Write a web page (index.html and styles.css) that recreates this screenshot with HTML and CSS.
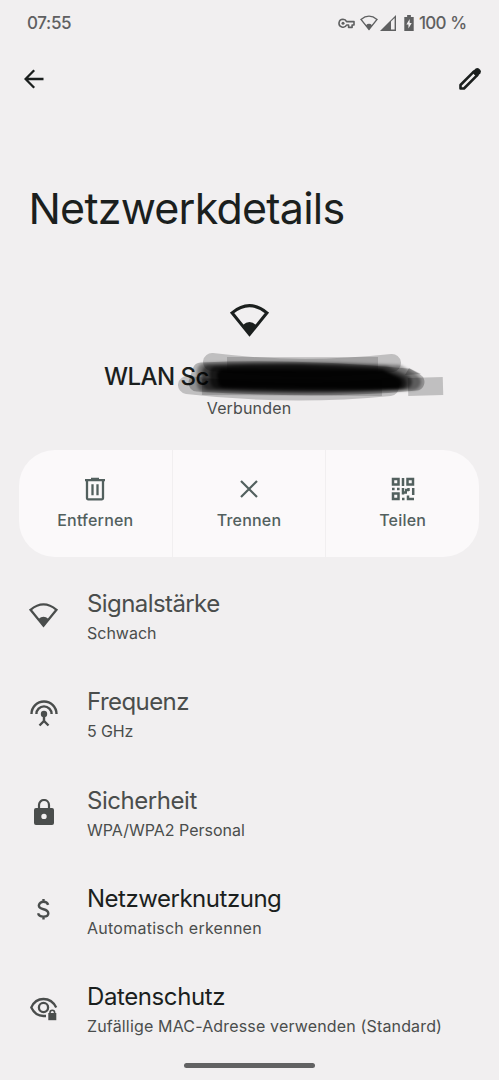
FILE: index.html
```html
<!DOCTYPE html>
<html lang="de">
<head>
<meta charset="utf-8">
<meta name="viewport" content="width=device-width">
<title>Netzwerkdetails</title>
<link rel="stylesheet" href="styles.css">
</head>
<body>
<svg class="defs" width="0" height="0" aria-hidden="true">
  <symbol id="wifi" viewBox="0 0 38 32">
    <path d="M2 8.5Q19-5.5 36 8.5L19 29.5Z" fill="none" stroke="currentColor" stroke-width="2.9"/>
    <path d="M12.5 20.5Q19 14.5 25.5 20.5L19 31Z" fill="currentColor"/>
  </symbol>
</svg>
<main class="screen">
  <header class="status">
    <span class="time">07:55</span>
    <div class="status-icons">
      <svg class="key" viewBox="0 0 17 11"><path d="M5 1.2a4 4 0 1 0 3.6 5.8h2v2.4h3.5V7H16V3.6H8.6A4 4 0 0 0 5 1.2Z" fill="none" stroke="currentColor" stroke-width="1.6" stroke-linejoin="round"/><circle cx="5" cy="5.3" r="1.5" fill="currentColor"/></svg>
      <svg class="status-wifi"><use href="#wifi"/></svg>
      <svg class="cell" viewBox="0 0 16 16"><path d="M0 16L16 0V16Z" fill="currentColor"/><path d="M11 6.6l3.6-3.6v11.6H11Z" fill="#f1eff0"/></svg>
      <svg class="battery" viewBox="0 0 10 17"><path d="M3 0h4v2h3v15H0V2h3Z" fill="currentColor"/><path d="M5.7 4.3L2.2 10h2.2v4.3L7.9 8.6H5.7Z" fill="#f1eff0"/></svg>
    </div>
    <span class="percent">100 %</span>
  </header>

  <nav class="toolbar">
    <svg class="back" viewBox="0 0 20 20"><path d="M19.5 10H2M10.2 1.2L1.5 10l8.7 8.8" fill="none" stroke="currentColor" stroke-width="2.3"/></svg>
    <svg class="edit" viewBox="0 0 24 24"><path d="M2.5 18L15.8 4.7l3.5 3.5L6 21.5H2.5Z" fill="none" stroke="currentColor" stroke-width="2.6" stroke-linejoin="round"/><path d="M14 5.3l3.7-3.7q1.6-1.2 3.2 0l1.5 1.5q1.2 1.6 0 3.2l-3.7 3.7Z" fill="currentColor"/></svg>
  </nav>

  <h1 class="title">Netzwerkdetails</h1>

  <section class="network">
    <svg class="network-wifi"><use href="#wifi"/></svg>
    <div class="ssid"><span>WLAN Sc</span>
      <svg class="scribble" viewBox="178 350 268 52">
        <g fill="none" stroke="#000" stroke-linecap="round" stroke-linejoin="round">
          <path d="M212 362Q300 373 392 363" stroke-width="18" stroke-opacity=".2"/>
          <path d="M187 385Q290 397 390 387" stroke-width="18" stroke-opacity=".2"/>
          <path d="M227 365L378 365M202 387L382 388" stroke-width="16" stroke-linecap="butt" stroke-opacity=".16"/>
          <path d="M408 387L443 386" stroke-width="18" stroke-linecap="butt" stroke-opacity=".2"/>
          <path d="M201 371Q300 367 407 377L416 382Q330 391 197 383Z" stroke-width="17" fill="#000" opacity=".24"/>
          <g class="ink">
            <path d="M205 371Q300 368 398 373L413 382Q330 388 205 384Z" stroke-width="16" fill="#000" opacity=".36"/>
            <path d="M209 372Q300 368 385 373L405 382Q320 388 209 383Z" stroke-width="14" fill="#000" opacity=".5"/>
            <path d="M216 373Q240 371 302 371L380 375L400 383Q320 386 217 382Z" stroke-width="13" fill="#000" opacity=".6"/>
            <path d="M223 375L382 376L396 383L224 382Z" stroke-width="12" fill="#000" opacity=".85"/>
          </g>
        </g>
        <path d="M405 375l4-7 12 6Z" opacity=".22"/>
      </svg>
    </div>
    <p class="state">Verbunden</p>
  </section>

  <section class="actions">
    <div class="action">
      <svg viewBox="0 0 24 24"><g fill="none" stroke="currentColor" stroke-width="2.3"><path d="M2 3.2h20M8 2h8M4 4v17.3q0 1 1 1h14q1 0 1-1V4"/><path d="M9.5 7.3v11M14.5 7.3v11"/></g></svg>
      <span>Entfernen</span>
    </div>
    <div class="action">
      <svg viewBox="0 0 24 24"><path d="M4 4l16 16M20 4L4 20" stroke="currentColor" stroke-width="2.2"/></svg>
      <span>Trennen</span>
    </div>
    <div class="action">
      <svg viewBox="0 0 24 24"><g fill="none" stroke="currentColor" stroke-width="2.5"><path d="M2 2h5.5v5.5H2ZM16.5 2H22v5.5h-5.5ZM2 16.5h5.5V22H2Z"/><path d="M12 1v8M1 12h2.6M6 12h2.6M12 11v6.5M12 15.5h4M17.5 11v3M18 13h-4M22.2 11v7M11 22h2.5M17 18.5V22h6"/></g></svg>
      <span>Teilen</span>
    </div>
  </section>

  <section class="details">
    <div class="row muted">
      <svg class="row-wifi"><use href="#wifi"/></svg>
      <div><h2 class="t-signal">Signalstärke</h2><p class="s-weak">Schwach</p></div>
    </div>
    <div class="row muted">
      <svg class="antenna" viewBox="0 0 28 28"><g fill="none" stroke="currentColor" stroke-width="2.4"><path d="M1.5 15a12.5 12.5 0 0 1 25 0M6.4 15a7.6 7.6 0 0 1 15.2 0"/><path d="M14 15v7M9.5 26.5l4.5-4.5 4.5 4.5"/></g><circle cx="14" cy="15" r="3.2" fill="currentColor"/></svg>
      <div><h2 class="t-freq">Frequenz</h2><p class="s-ghz">5 GHz</p></div>
    </div>
    <div class="row muted">
      <svg class="lock" viewBox="0 0 20 26"><path d="M5 10V6a5 5 0 0 1 10 0v4" fill="none" stroke="currentColor" stroke-width="2.2"/><path d="M2 9h16q2 0 2 2v13q0 2-2 2H2q-2 0-2-2V11q0-2 2-2Zm8 5.7a2.7 2.7 0 1 0 0 5.4 2.7 2.7 0 0 0 0-5.4Z" fill="currentColor" fill-rule="evenodd"/></svg>
      <div><h2 class="t-security">Sicherheit</h2><p class="s-wpa">WPA/WPA2 Personal</p></div>
    </div>
    <div class="row">
      <svg class="dollar" viewBox="0 0 14 24"><path d="M12 7Q11 3.7 7 3.7T2 7.6Q2 10.4 7 11.7T12.2 16Q12.2 19.7 7 19.7T1.2 16M7 .8v3M7 19.7v3" fill="none" stroke="currentColor" stroke-width="2.6"/></svg>
      <div><h2 class="t-usage">Netzwerknutzung</h2><p class="s-auto">Automatisch erkennen</p></div>
    </div>
    <div class="row">
      <svg class="eye" viewBox="0 0 28 24"><g fill="none" stroke="currentColor" stroke-width="2.3"><path d="M26.2 10.5Q22 2 13.5 2T1.3 10.5Q5.3 19 13.5 19h2.5"/><circle cx="13.5" cy="10.5" r="4.6"/><path d="M20 17v-1.5a2.3 2.3 0 0 1 4.6 0V17" stroke-width="1.6"/></g><path d="M18.3 16h8v7.2h-8Z" fill="currentColor"/></svg>
      <div><h2 class="t-privacy">Datenschutz</h2><p class="s-mac">Zufällige MAC-Adresse verwenden (Standard)</p></div>
    </div>
  </section>
  <div class="home-bar"></div>
</main>
</body>
</html>
```
FILE: styles.css
```css
* { box-sizing: border-box; }
body { margin: 0; background: #f1eff0; color: #1b1f1e; font-family: Inter, Roboto, sans-serif; }
h1, h2, p { margin: 0; font-weight: 400; }
svg { display: block; flex: none; }
.defs { display: none; }
.screen { width: 499px; height: 1080px; display: flex; flex-direction: column; overflow: hidden; }
.status { height: 46px; padding: 0 33px 0 27px; display: flex; align-items: center; color: #5f6061; font-size: 17px; font-weight: 500; }
.time { letter-spacing: -.35px; }
.status-icons { margin-left: auto; display: flex; align-items: center; }
.key { width: 17px; height: 11px; margin-right: 5px; }
.status-wifi { width: 18px; height: 16px; margin-right: 2px; }
.cell { width: 16px; height: 16px; margin-right: 8px; }
.battery { width: 10px; height: 16px; margin-right: 5px; }
.percent { width: 47px; white-space: nowrap; letter-spacing: -.8px; word-spacing: 1px; }
.toolbar { height: 66px; padding: 0 17px 0 24px; display: flex; align-items: center; justify-content: space-between; }
.back { width: 20px; height: 20px; }
.edit { width: 24px; height: 24px; }
.title { height: 188px; padding: 70px 0 0 28.5px; font-size: 43px; line-height: 52px; letter-spacing: -.78px; white-space: nowrap; }
.network { height: 150px; padding-top: 4px; display: flex; flex-direction: column; align-items: center; }
.network-wifi { width: 39px; height: 33px; margin-right: 1px; }
.ssid { position: relative; width: 100%; height: 30px; margin-top: 24px; padding-left: 104px; font-size: 24px; line-height: 31px; font-weight: 500; letter-spacing: -.55px; }
.scribble { position: absolute; left: 178px; top: -11px; width: 268px; height: 52px; }
.ink { filter: blur(1.5px); }
.state { margin-top: 7px; padding-right: 1px; font-size: 16px; line-height: 20px; letter-spacing: .15px; color: #4a4d4c; }
.actions { height: 107px; margin: 0 20px 0 19px; display: grid; grid-template-columns: repeat(3, 1fr); gap: 1px; border-radius: 36px; overflow: hidden; }
.action { background: #fbf9fa; color: #52605e; display: flex; flex-direction: column; align-items: center; padding-top: 27px; gap: 9px; font-size: 16px; line-height: 20px; font-weight: 500; letter-spacing: .2px; }
.action svg { width: 24px; height: 24px; }
.details { padding-top: 10px; }
.row { height: 98.3px; padding-top: 21px; display: grid; grid-template-columns: 87px 1fr; color: #4a4d4c; }
.row > svg { justify-self: center; align-self: start; }
.row h2 { color: #1b1f1e; font-size: 24px; line-height: 32px; white-space: nowrap; }
.row.muted h2 { color: #4a4d4c; }
.row p { font-size: 16px; line-height: 20px; margin-top: 3px; white-space: nowrap; }
.row .t-signal { letter-spacing: -.58px; }
.row .t-freq { letter-spacing: -.57px; }
.row .t-security { letter-spacing: -.45px; }
.row .t-usage { letter-spacing: -.48px; }
.row .t-privacy { letter-spacing: -.4px; }
.s-ghz { letter-spacing: -.15px; }
.s-auto { letter-spacing: .25px; }
.s-mac { letter-spacing: .16px; }
.row-wifi { width: 29px; height: 25px; margin-top: 15px; }
.antenna { width: 28px; height: 28px; margin-top: 12.5px; }
.lock { width: 20px; height: 26px; margin-top: 14px; }
.dollar { width: 13px; height: 23px; margin-top: 15.5px; }
.eye { width: 28px; height: 24px; margin-top: 16px; }
.home-bar { position: absolute; left: 184px; top: 1063px; width: 131px; height: 5px; border-radius: 3px; background: #626263; }
```
